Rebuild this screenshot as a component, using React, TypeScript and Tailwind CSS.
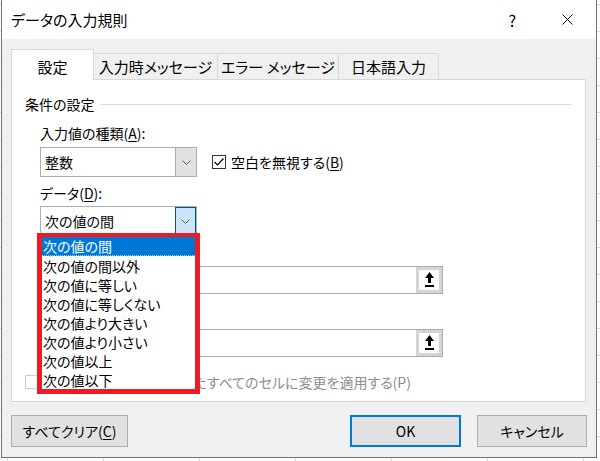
import React from 'react';

const options = [
    '次の値の間',
    '次の値の間以外',
    '次の値に等しい',
    '次の値に等しくない',
    '次の値より大きい',
    '次の値より小さい',
    '次の値以上',
    '次の値以下',
];

function Chevron() {
    return (
        <svg width="9" height="5" viewBox="0 0 9 5" fill="none">
            <polyline points="0.5,0.5 4.5,4.5 8.5,0.5" stroke="#606060" strokeWidth="1" />
        </svg>
    );
}

function RefButton() {
    return (
        <div className="flex h-full w-[26px] items-center justify-center border-[3px] border-[#d4d4d4] bg-white">
            <svg width="11" height="16" viewBox="0 0 11 16">
                <polygon points="5.5,0 10,6 7,6 7,11 4,11 4,6 1,6" fill="#000" />
                <rect x="1" y="13" width="9" height="2" fill="#000" />
            </svg>
        </div>
    );
}

function Select({ value, active }: { value: string; active?: boolean }) {
    return (
        <div className="flex h-[30px] w-[157px] border border-[#adadad] bg-white">
            <div className="flex flex-1 items-center pl-[4px]">{value}</div>
            <div
                className={
                    active
                        ? 'flex w-[21px] items-center justify-center border border-[#005499] bg-[#cce4f7]'
                        : 'flex w-[21px] items-center justify-center border-l border-[#adadad] bg-[#e1e1e1]'
                }
            >
                <Chevron />
            </div>
        </div>
    );
}

export default function App() {
    return (
        <div className="relative h-[461px] w-[600px] overflow-hidden bg-white bg-[linear-gradient(#dadada_1px,transparent_1px),linear-gradient(90deg,#dadada_1px,transparent_1px)] bg-[length:96px_27px] bg-[position:7px_4px] font-['Noto_Sans_CJK_JP',sans-serif] text-[14px] leading-[18px] text-black [font-feature-settings:'palt']">
            <div className="ml-px flex h-[458px] w-[596px] flex-col border border-t-0 border-[#707070] bg-[#f0f0f0]">
                {/* title bar */}
                <div className="flex h-[39px] items-center bg-white pl-[9px]">
                    <span className="text-[15px]">データの入力規則</span>
                    <span className="ml-auto mr-[46px] text-[16px]">?</span>
                    <svg width="11" height="11" viewBox="0 0 11 11" className="mr-[23px]">
                        <path d="M0.5 0.5 L10.5 10.5 M10.5 0.5 L0.5 10.5" stroke="#000" strokeWidth="1" />
                    </svg>
                </div>

                <div className="flex flex-1 flex-col px-[9px] pt-[10px]">
                    {/* tabs */}
                    <div className="relative z-10 -mb-px flex h-[31px] items-end">
                        <div className="flex h-[31px] w-[83px] items-center justify-center border border-b-0 border-[#d9d9d9] bg-white pt-[4px] text-[15px]">
                            設定
                        </div>
                        <div className="flex h-[27px] w-[124px] items-center justify-center border border-l-0 border-[#d9d9d9] text-[15px]">
                            入力時メッセージ
                        </div>
                        <div className="flex h-[27px] w-[121px] items-center justify-center border border-l-0 border-[#d9d9d9] text-[15px]">
                            エラー メッセージ
                        </div>
                        <div className="flex h-[27px] w-[100px] items-center justify-center border border-l-0 border-[#d9d9d9] text-[15px]">
                            日本語入力
                        </div>
                    </div>

                    {/* panel */}
                    <div className="flex h-[323px] w-[575px] flex-col border border-[#d9d9d9] bg-white pl-[13px] pt-[15px]">
                        <div className="flex h-[18px] items-center">
                            <span>条件の設定</span>
                            <div className="ml-[5px] mr-[13px] h-px flex-1 bg-[#dcdcdc]" />
                        </div>

                        <div className="ml-[15px] flex flex-col">
                            <div className="mt-[11px]">
                                入力値の種類(<span className="underline underline-offset-2">A</span>):
                            </div>
                            <div className="mt-[5px] flex items-center">
                                <Select value="整数" />
                                <div className="ml-[15px] flex items-center">
                                    <div className="flex h-[14px] w-[14px] items-center justify-center border border-[#333]">
                                        <svg width="10" height="8" viewBox="0 0 10 8">
                                            <polyline points="0.5,4 3.5,7 9.5,0.5" fill="none" stroke="#000" strokeWidth="1.2" />
                                        </svg>
                                    </div>
                                    <span className="ml-[5px]">
                                        空白を無視する(<span className="underline underline-offset-2">B</span>)
                                    </span>
                                </div>
                            </div>

                            <div className="mt-[7px]">
                                データ(<span className="underline underline-offset-2">D</span>):
                            </div>
                            <div className="mt-[4px]">
                                <Select value="次の値の間" active />
                            </div>

                            {/* field labels sit under the open list */}
                            <div className="mt-[7px] h-[18px]" />
                            <div className="mt-[5px] flex h-[28px] w-[403px] border border-[#adadad]">
                                <div className="flex-1" />
                                <RefButton />
                            </div>

                            <div className="mt-[12px] h-[18px]" />
                            <div className="mt-[5px] flex h-[28px] w-[403px] border border-[#adadad]">
                                <div className="flex-1" />
                                <RefButton />
                            </div>
                        </div>

                        <div className="mt-[16px] flex items-center">
                            <div className="h-[14px] w-[14px] border border-[#cccccc]" />
                            <span className="ml-[4px] text-[#8d8d8d]">
                                同じ入力規則が設定されたすべてのセルに変更を適用する(P)
                            </span>
                        </div>
                    </div>

                    {/* buttons */}
                    <div className="mt-[13px] flex h-[32px]">
                        <button className="w-[117px] border border-[#adadad] bg-[#e1e1e1]">
                            すべてクリア(<span className="underline underline-offset-2">C</span>)
                        </button>
                        <button className="ml-auto w-[111px] border-2 border-[#0078d7] bg-[#e1e1e1]">OK</button>
                        <button className="ml-[16px] w-[110px] border border-[#adadad] bg-[#e1e1e1]">キャンセル</button>
                    </div>
                </div>
            </div>

            {/* open dropdown list */}
            <div className="absolute left-[37px] top-[233px] w-[163px] border-[5px] border-t-4 border-[#ed1c24] bg-white">
                {options.map((o, i) => (
                    <div
                        key={o}
                        className={
                            i === 0
                                ? 'flex h-[19px] items-center border-b border-dotted border-[#9ec9ef] bg-[#0078d7] pl-[1px] text-white'
                                : 'flex h-[19px] items-center pl-[1px]'
                        }
                    >
                        {o}
                    </div>
                ))}
            </div>
        </div>
    );
}
